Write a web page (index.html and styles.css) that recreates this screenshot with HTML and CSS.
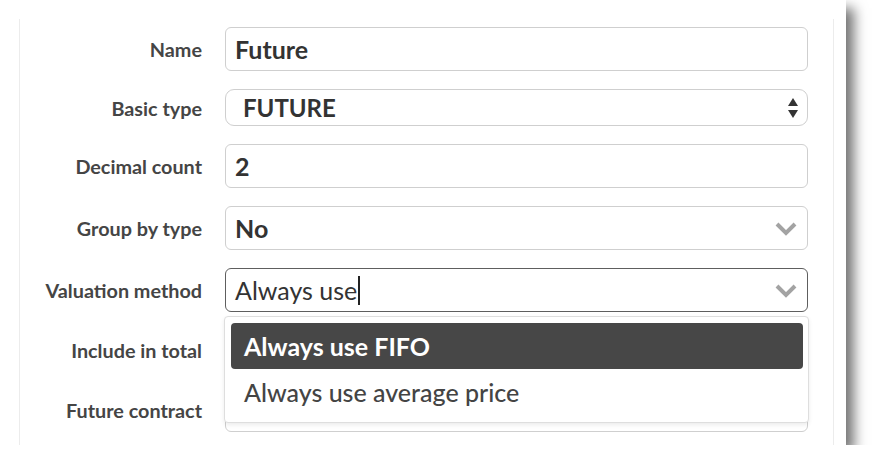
FILE: index.html
```html
<!DOCTYPE html>
<html lang="en">

<head>
  <meta charset="UTF-8">
  <meta name="viewport" content="width=device-width, initial-scale=1.0">
  <title>Instrument Type</title>
  <link rel="stylesheet" href="styles.css">
</head>

<body>
  <div class="window">
    <div class="panel">
      <form class="type-form">
        <div class="form-row">
          <label>Name</label>
          <div class="field">Future</div>
        </div>

        <div class="form-row">
          <label>Basic type</label>
          <div class="field native-select">
            FUTURE
            <svg class="updown" width="12" height="22" viewBox="0 0 12 22">
              <path d="M6 1 L11 9 L1 9 Z" fill="#333" />
              <path d="M1 13 L11 13 L6 21 Z" fill="#333" />
            </svg>
          </div>
        </div>

        <div class="form-row">
          <label>Decimal count</label>
          <div class="field">2</div>
        </div>

        <div class="form-row">
          <label>Group by type</label>
          <div class="field chooser">
            No
            <svg class="chevron" width="22" height="14" viewBox="0 0 22 14">
              <path d="M2 2 L11 11 L20 2" fill="none" stroke="#a3a3a3" stroke-width="4" />
            </svg>
          </div>
        </div>

        <div class="form-row">
          <label>Valuation method</label>
          <div class="combo">
            <div class="field chooser focused">
              <span class="typed">Always use<span class="caret"></span></span>
              <svg class="chevron" width="22" height="14" viewBox="0 0 22 14">
                <path d="M2 2 L11 11 L20 2" fill="none" stroke="#a3a3a3" stroke-width="4" />
              </svg>
            </div>
            <ul class="options">
              <li class="active">Always use FIFO</li>
              <li>Always use average price</li>
            </ul>
          </div>
        </div>

        <div class="form-row">
          <label>Include in total</label>
          <div class="field short"></div>
        </div>

        <div class="form-row">
          <label>Future contract</label>
          <div class="field"></div>
        </div>
      </form>
    </div>
  </div>
</body>

</html>
```

FILE: styles.css
```css
body {
  font-family: Lato, "Open Sans", sans-serif;
  background-color: #ffffff;
  margin: 0;
  padding: 0;
  overflow: hidden;
}

.window {
  width: 846px;
  height: 445px;
  background-color: #ffffff;
  box-shadow: 8px 8px 12px rgba(0, 0, 0, 0.55);
  display: flex;
}

.panel {
  flex: 1;
  margin: 19px 12px 0 19px;
  border-left: 1px solid #ececec;
  border-right: 1px solid #ececec;
  padding: 8px 25px 0 0;
}

.type-form {
  display: flex;
  flex-direction: column;
  gap: 18px;
}

.form-row {
  display: flex;
  align-items: center;
  gap: 23px;
}

.form-row label {
  width: 182px;
  flex-shrink: 0;
  text-align: right;
  font-weight: bold;
  font-size: 19.8px;
  color: #454545;
}

.field {
  flex: 1;
  position: relative;
  height: 44px;
  box-sizing: border-box;
  border: 1px solid #cfcfcf;
  border-radius: 6px;
  padding: 0 9px;
  display: flex;
  align-items: center;
  font-size: 25px;
  font-weight: bold;
  color: #333;
}

.field.short {
  height: 40px;
}

.native-select {
  height: 37px;
  border-radius: 9px;
  padding-left: 17px;
  font-size: 24px;
}

.updown {
  position: absolute;
  right: 8px;
  top: 7px;
}

.chevron {
  position: absolute;
  right: 10px;
  top: 15px;
}

.combo {
  flex: 1;
  position: relative;
  display: flex;
}

.focused {
  border-color: #5e5e5e;
  font-weight: normal;
}

.typed {
  display: flex;
  align-items: center;
}

.caret {
  display: inline-block;
  width: 1.5px;
  height: 29px;
  margin-left: 1px;
  background-color: #222;
}

.options {
  position: absolute;
  top: 48px;
  left: -1px;
  right: -1px;
  margin: 0;
  padding: 6px 5px 7px 6px;
  list-style: none;
  background-color: #ffffff;
  border: 1px solid #dedede;
  border-radius: 4px;
  box-shadow: 0 2px 4px rgba(0, 0, 0, 0.08);
  z-index: 2;
}

.options li {
  height: 46px;
  display: flex;
  align-items: center;
  padding-left: 13px;
  font-size: 25px;
  font-weight: 500;
  color: #444;
  border-radius: 4px;
}

.options li.active {
  background-color: #474747;
  color: #ffffff;
  font-weight: bold;
}
```
